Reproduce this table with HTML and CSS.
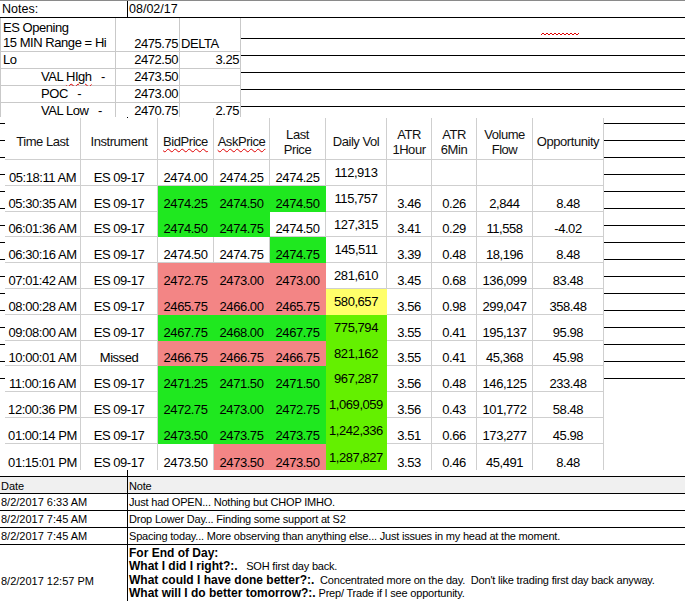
FILE: index.html
```html
<!DOCTYPE html>
<html>
<head>
<meta charset="utf-8">
<link rel="stylesheet" href="styles.css">
</head>
<body>
<div class="page">
  <div class="notes-row">
    <div class="notes-label">Notes:</div>
    <div class="notes-date">08/02/17</div>
  </div>

  <div class="es">
    <div class="es-title">ES Opening<br>15 MIN Range = Hi</div>
    <div class="es-bot num">2475.75</div>
    <div class="es-bot">DELTA</div>
    <div>Lo</div><div class="num">2472.50</div><div class="num">3.25</div>
    <div class="ind">VAL <span class="spell">HIgh</span>   -</div><div class="num">2473.50</div><div></div>
    <div class="ind">POC   -</div><div class="num">2473.00</div><div></div>
    <div class="ind">VAL Low   -</div><div class="num">2470.75</div><div class="num">2.75</div>
  </div>

  <div class="tbl">
    <div class="h">Time Last</div><div class="h">Instrument</div><div class="h"><span class="spell">BidPrice</span></div><div class="h"><span class="spell">AskPrice</span></div><div class="h">Last<br>Price</div><div class="h">Daily Vol</div><div class="h">ATR<br>1Hour</div><div class="h">ATR<br>6Min</div><div class="h">Volume<br>Flow</div><div class="h">Opportunity</div>

    <div>05:18:11 AM</div><div>ES 09-17</div><div>2474.00</div><div>2474.25</div><div>2474.25</div><div class="v">112,913</div><div></div><div></div><div></div><div></div>

    <div>05:30:35 AM</div><div>ES 09-17</div><div class="g">2474.25</div><div class="g">2474.50</div><div class="g">2474.50</div><div class="v">115,757</div><div>3.46</div><div>0.26</div><div>2,844</div><div>8.48</div>

    <div>06:01:36 AM</div><div>ES 09-17</div><div class="g">2474.50</div><div class="g">2474.75</div><div>2474.50</div><div class="v">127,315</div><div>3.41</div><div>0.29</div><div>11,558</div><div>-4.02</div>

    <div>06:30:16 AM</div><div>ES 09-17</div><div>2474.50</div><div>2474.75</div><div class="g">2474.75</div><div class="v">145,511</div><div>3.39</div><div>0.48</div><div>18,196</div><div>8.48</div>

    <div>07:01:42 AM</div><div>ES 09-17</div><div class="r">2472.75</div><div class="r">2473.00</div><div class="r">2473.00</div><div class="v">281,610</div><div>3.45</div><div>0.68</div><div>136,099</div><div>83.48</div>

    <div>08:00:28 AM</div><div>ES 09-17</div><div class="r">2465.75</div><div class="r">2466.00</div><div class="r">2465.75</div><div class="v y">580,657</div><div>3.56</div><div>0.98</div><div>299,047</div><div>358.48</div>

    <div>09:08:00 AM</div><div>ES 09-17</div><div class="g">2467.75</div><div class="g">2468.00</div><div class="g">2467.75</div><div class="v lg">775,794</div><div>3.55</div><div>0.41</div><div>195,137</div><div>95.98</div>

    <div>10:00:01 AM</div><div>Missed</div><div class="r">2466.75</div><div class="r">2466.75</div><div class="r">2466.75</div><div class="v lg">821,162</div><div>3.55</div><div>0.41</div><div>45,368</div><div>45.98</div>

    <div>11:00:16 AM</div><div>ES 09-17</div><div class="g">2471.25</div><div class="g">2471.50</div><div class="g">2471.50</div><div class="v lg">967,287</div><div>3.56</div><div>0.48</div><div>146,125</div><div>233.48</div>

    <div>12:00:36 PM</div><div>ES 09-17</div><div class="g">2472.75</div><div class="g">2473.00</div><div class="g">2472.75</div><div class="v lg">1,069,059</div><div>3.56</div><div>0.43</div><div>101,772</div><div>58.48</div>

    <div>01:00:14 PM</div><div>ES 09-17</div><div class="g">2473.50</div><div class="g">2473.75</div><div class="g">2473.75</div><div class="v lg">1,242,336</div><div>3.51</div><div>0.66</div><div>173,277</div><div>45.98</div>

    <div class="z">01:15:01 PM</div><div class="z">ES 09-17</div><div class="z">2473.50</div><div class="z r">2473.50</div><div class="z r">2473.50</div><div class="z v lg">1,287,827</div><div class="z">3.53</div><div class="z">0.46</div><div class="z">45,491</div><div class="z">8.48</div>
  </div>

  <div class="log">
    <div class="lh">Date</div><div class="lh note">Note</div>
    <div class="ld">8/2/2017 6:33 AM</div><div class="ld note">Just had OPEN... Nothing but CHOP IMHO.</div>
    <div class="ld">8/2/2017 7:45 AM</div><div class="ld note">Drop Lower Day... Finding some support at S2</div>
    <div class="ld">8/2/2017 7:45 AM</div><div class="ld note">Spacing today... More observing than anything else... Just issues in my head at the moment.</div>
    <div class="lt">8/2/2017 12:57 PM</div>
    <div class="lt note eod"><b>For End of Day:</b><br><b>What I did I right?:.</b>   SOH first day back.<br><b>What could I have done better?:.</b>  Concentrated more on the day.  Don't like trading first day back anyway.<br><b>What will I do better tomorrow?:.</b> Prep/ Trade if I see opportunity.</div>
  </div>

  <svg class="squiggle" width="38" height="4" viewBox="0 0 38 4"><polyline points="0,3 2,1 4,3 6,1 8,3 10,1 12,3 14,1 16,3 18,1 20,3 22,1 24,3 26,1 28,3 30,1 32,3 34,1 36,3 38,1" fill="none" stroke="#e00000" stroke-width="1"/></svg>
</div>
</body>
</html>
```

FILE: styles.css
```css
* { box-sizing: border-box; }

body {
  margin: 0;
  background: #fff;
  font-family: "Liberation Sans", Arial, sans-serif;
  color: #000;
}

.page {
  position: relative;
  width: 685px;
  height: 601px;
  overflow: hidden;
  background-color: #fff;
  background-image:
    repeating-linear-gradient(to bottom, #000 0, #000 1px, transparent 1px, transparent 17px),
    linear-gradient(#000, #000);
  background-size: 100% 341px, 1px 100%;
  background-position: 0 38px, 127px 0;
  background-repeat: no-repeat;
}

/* top notes row */
.notes-row {
  display: flex;
  height: 18px;
  border-top: 1px solid #8a8a8a;
  border-bottom: 1px solid #000;
  font-size: 12.5px;
  line-height: 16px;
}
.notes-label { width: 128px; padding-left: 2px; }
.notes-date { padding-left: 1px; }

/* ES opening block */
.es {
  display: grid;
  width: 241px;
  grid-template-columns: 114px 63px 60px;
  grid-template-rows: 33px 16px 16px 16px 14px;
  gap: 1px;
  padding: 0 1px;
  background: #c9c9c9;
  font-size: 13px;
  letter-spacing: -0.45px;
  line-height: 16px;
}
.es > div {
  background: #fff;
  white-space: pre;
  padding: 0 1px 0 2px;
}
.es .es-title { padding-top: 2px; line-height: 15px; }
.es .es-bot { display: flex; align-items: flex-end; line-height: 15px; padding-left: 1px; }
.es .es-bot.num { justify-content: flex-end; }
.es .num { text-align: right; padding-right: 1px; }
.es .ind { padding-left: 40px; }

.spell {
  text-decoration: underline wavy #e00000;
  text-decoration-thickness: 1px;
  text-underline-offset: 2px;
}

/* main data table */
.tbl {
  display: grid;
  margin: 1px 0 0 5px;
  width: 599px;
  grid-template-columns: 76px 77px 56px 56px 56px 61px 45px 45px 56px 71px;
  grid-template-rows: 42px 26px 26px 25px 26px 26px 26px 26px 25px 26px 26px 26px 26px;
  background: #fff;
  font-size: 13px;
  letter-spacing: -0.45px;
  line-height: 15px;
}
.tbl > div {
  display: flex;
  justify-content: center;
  align-items: flex-end;
  white-space: nowrap;
  border-right: 1px solid #cfcfcf;
  border-bottom: 1px solid #cfcfcf;
}
.tbl > .h {
  align-items: center;
  text-align: center;
  padding-top: 6px;
  color: #111;
}
.tbl > .v { align-items: center; }
.tbl > .z { border-bottom: none; }

.tbl > .g { background: #1fe81f; border-color: #1fe81f; }
.tbl > .r { background: #f38585; border-color: #f38585; }
.tbl > .y { background: #ffff6a; border-color: #ffff6a; }
.tbl > .lg { background: #64f000; border-color: #64f000; }

/* bottom log */
.log {
  display: grid;
  margin-top: 6px;
  height: 125px;
  border-top: 1px solid #000;
  grid-template-columns: 127px 1fr;
  grid-template-rows: 17px 17px 17px 17px 1fr;
  font-size: 11px;
  line-height: 13px;
  background: #fff;
}
.log > div {
  border-bottom: 1px solid #000;
  white-space: pre;
  padding-left: 1px;
}
.log > .note {
  border-left: 1px solid #000;
  padding-left: 1px;
  letter-spacing: -0.2px;
}
.log > .lh {
  background: #f0f0f0;
  display: flex;
  align-items: flex-end;
}
.log > .ld {
  display: flex;
  align-items: flex-end;
  padding-bottom: 1px;
}
.log > .lt {
  border-bottom: none;
  padding-top: 30px;
}
.log > .eod {
  padding-top: 2px;
  line-height: 13.4px;
}
.log b {
  font-size: 12px;
  letter-spacing: 0;
}

.squiggle {
  position: absolute;
  left: 541px;
  top: 32px;
}
```
